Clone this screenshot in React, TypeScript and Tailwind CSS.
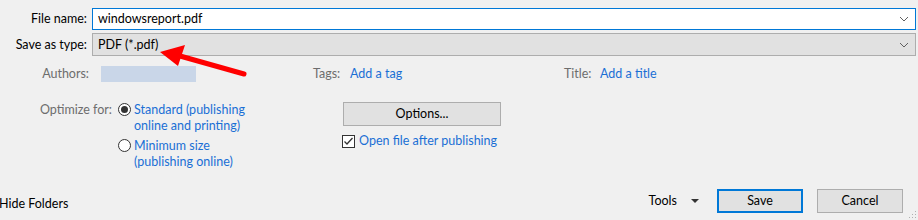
import React from "react";

function Chevron() {
  return (
    <svg width="10" height="6" viewBox="0 0 10 6" className="shrink-0">
      <path d="M1 1 L5 5 L9 1" fill="none" stroke="#606060" strokeWidth="1" />
    </svg>
  );
}

function Radio({ checked }: { checked?: boolean }) {
  return (
    <span className="w-[13px] h-[13px] rounded-full border border-[#333333] bg-white flex items-center justify-center shrink-0">
      {checked && <span className="w-[7px] h-[7px] rounded-full bg-[#333333]" />}
    </span>
  );
}

export default function App() {
  return (
    <div
      className="w-[918px] h-[220px] bg-[#f0f0f0] relative overflow-hidden text-[12.5px] leading-[16px] text-[#000000] flex flex-col"
      style={{ fontFamily: 'Lato, "Noto Sans", sans-serif' }}
    >
      {/* File name */}
      <div className="flex items-center mt-[8px]">
        <div className="w-[88px] text-right pr-[1px]">File name:</div>
        <div className="ml-[4px] mr-[2px] flex-1 h-[22px] border border-[#0078d7] bg-white flex items-center pl-[5px] pr-[6px]">
          <span className="flex-1">windowsreport.pdf</span>
          <Chevron />
        </div>
      </div>
      {/* Save as type */}
      <div className="flex items-center mt-[3px]">
        <div className="w-[88px] text-right pr-[1px]">Save as type:</div>
        <div className="ml-[4px] mr-[2px] flex-1 h-[23px] border border-[#adadad] bg-[#e1e1e1] flex items-center pl-[5px] pr-[6px]">
          <span className="flex-1">PDF (*.pdf)</span>
          <Chevron />
        </div>
      </div>
      {/* Authors / Tags / Title */}
      <div className="flex items-center mt-[10px] h-[16px]">
        <div className="w-[89px] text-right text-[#6d6d6d]">Authors:</div>
        <div className="ml-[12px] w-[95px] h-[16px] bg-[#c9d6e8]" />
        <div className="w-[117px]" />
        <div className="w-[37px] text-[#6d6d6d]">Tags:</div>
        <div className="w-[214px] text-[#1a6fd5]">Add a tag</div>
        <div className="w-[36px] text-[#6d6d6d]">Title:</div>
        <div className="text-[#1a6fd5]">Add a title</div>
      </div>
      {/* Optimize section */}
      <div className="flex mt-[20px]">
        <div className="w-[112px] text-right text-[#6d6d6d]">Optimize for:</div>
        <div className="ml-[6px] flex flex-col w-[219px]">
          <div className="flex items-start gap-[3px]">
            <div className="mt-[1px]"><Radio checked /></div>
            <div className="text-[#1a6fd5]">
              Standard (publishing
              <br />
              online and printing)
            </div>
          </div>
          <div className="flex items-start gap-[3px] mt-[4px]">
            <div className="mt-[1px]"><Radio /></div>
            <div className="text-[#1a6fd5]">
              Minimum size
              <br />
              (publishing online)
            </div>
          </div>
        </div>
        <div className="ml-[5px] flex flex-col">
          <div className="ml-[1px] w-[158px] h-[24px] border border-[#adadad] bg-[#e1e1e1] flex items-center justify-center">
            Options...
          </div>
          <div className="flex items-center mt-[7px] gap-[4px]">
            <span className="w-[13px] h-[13px] border border-[#333333] bg-white flex items-center justify-center">
              <svg width="11" height="11" viewBox="0 0 11 11">
                <path d="M1.5 5.5 L4 8 L9.5 2" fill="none" stroke="#333333" strokeWidth="1.3" />
              </svg>
            </span>
            <span className="text-[#1a6fd5]">Open file after publishing</span>
          </div>
        </div>
      </div>
      <div className="flex-1" />
      {/* Bottom bar */}
      <div className="flex items-center mb-[7px] h-[24px]">
        <div className="-ml-[1px] mt-[6px]">Hide Folders</div>
        <div className="flex-1" />
        <div className="flex items-center mr-[18px]">
          <span>Tools</span>
          <svg width="8" height="5" viewBox="0 0 8 5" className="ml-[14px]">
            <path d="M0 0 L8 0 L4 4 Z" fill="#333333" />
          </svg>
        </div>
        <div className="w-[86px] h-[24px] border-2 border-[#0078d7] bg-[#e1e1e1] flex items-center justify-center">
          Save
        </div>
        <div className="ml-[14px] mr-[15px] w-[86px] h-[24px] border border-[#adadad] bg-[#e1e1e1] flex items-center justify-center">
          Cancel
        </div>
      </div>
      {/* resize grip */}
      <svg width="8" height="8" viewBox="0 0 8 8" className="absolute right-[1px] bottom-[1px]">
        <rect x="6" y="0" width="1" height="1" fill="#b0b0b0" />
        <rect x="3" y="3" width="1" height="1" fill="#b0b0b0" />
        <rect x="6" y="3" width="1" height="1" fill="#b0b0b0" />
        <rect x="0" y="6" width="1" height="1" fill="#b0b0b0" />
        <rect x="3" y="6" width="1" height="1" fill="#b0b0b0" />
        <rect x="6" y="6" width="1" height="1" fill="#b0b0b0" />
      </svg>
      {/* red arrow annotation */}
      <svg width="918" height="220" className="absolute left-0 top-0 pointer-events-none">
        <path d="M244 74 L180 56" stroke="#ff0000" strokeWidth="5" strokeLinecap="round" />
        <path d="M160 52 L185 45 L178 66 Z" fill="#ff0000" />
      </svg>
    </div>
  );
}
